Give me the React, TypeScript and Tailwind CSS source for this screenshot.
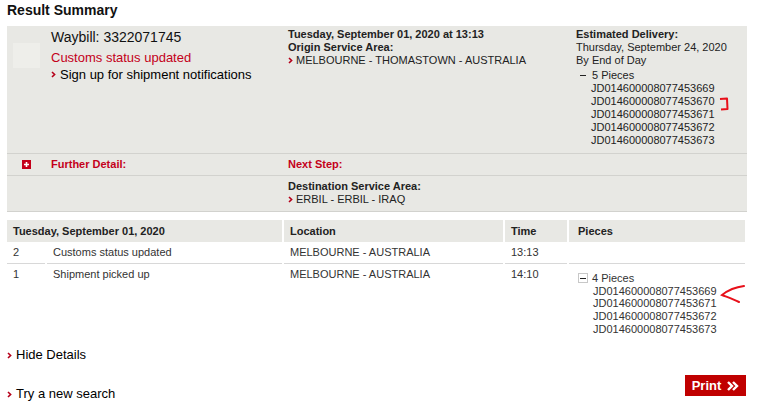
const pieces5 = [
  "JD014600008077453669",
  "JD014600008077453670",
  "JD014600008077453671",
  "JD014600008077453672",
  "JD014600008077453673",
];

const pieces4 = [
  "JD014600008077453669",
  "JD014600008077453671",
  "JD014600008077453672",
  "JD014600008077453673",
];

const Chevron = ({ className = "" }: { className?: string }) => (
  <svg width="5" height="7" viewBox="0 0 5 7" className={`inline-block shrink-0 ${className}`}>
    <path d="M1 1 L3.6 3.5 L1 6" fill="none" stroke="#b5001a" strokeWidth="1.6" />
  </svg>
);

const MinusBox = ({ boxed = false }: { boxed?: boolean }) => (
  <span
    className={`inline-flex w-[10px] h-[10px] items-center justify-center ${
      boxed ? "border border-[#c8c8c8] bg-white" : ""
    }`}
  >
    <span className="block w-[6px] h-[1.5px] bg-[#222]" />
  </span>
);

export default function App() {
  return (
    <div className="relative w-[758px] h-[410px] overflow-hidden bg-white px-[7px] font-['Liberation_Sans',Arial,sans-serif] text-[#222]">
      {/* title */}
      <div className="h-[26px] pt-[2px] text-[14px] leading-[17px] font-bold text-[#111]">Result Summary</div>

      {/* summary panel */}
      <div className="w-[740px] bg-[#e8e8e4] border-b border-[#d2d2ce]">
        <div className="grid grid-cols-[44px_237px_288px_171px] h-[127px] pt-[2px]">
          <div className="pl-[6px] pt-[15px]">
            <div className="w-[27px] h-[25px] bg-[#eeeeea]" />
          </div>
          <div className="pt-[1px]">
            <div className="text-[14px] leading-[17px] text-[#111] mb-[3px]">Waybill: 3322071745</div>
            <div className="text-[13px] leading-[17px] text-[#c4001a]">Customs status updated</div>
            <div className="flex items-center gap-[4px] text-[13px] leading-[17px] text-[#000]">
              <Chevron />
              <span>Sign up for shipment notifications</span>
            </div>
          </div>
          <div className="text-[11px] leading-[13px]">
            <div className="font-bold">Tuesday, September 01, 2020 at 13:13</div>
            <div className="font-bold">Origin Service Area:</div>
            <div className="flex items-center gap-[3px]">
              <Chevron />
              <span>MELBOURNE - THOMASTOWN - AUSTRALIA</span>
            </div>
          </div>
          <div className="text-[11px] leading-[13px]">
            <div className="font-bold">Estimated Delivery:</div>
            <div>Thursday, September 24, 2020</div>
            <div>By End of Day</div>
            <div className="mt-[2px] flex items-center gap-[4px] pl-[2px]">
              <MinusBox />
              <span>5 Pieces</span>
            </div>
            <div className="pl-[15px]">
              {pieces5.map((p) => (
                <div key={p}>{p}</div>
              ))}
            </div>
          </div>
        </div>

        <div className="grid grid-cols-[44px_237px_459px] h-[22px] border-t border-[#d2d2ce] items-center text-[11px] font-bold text-[#c4001a]">
          <div className="pl-[15px]">
            <span className="flex w-[9px] h-[9px] items-center justify-center bg-[#c4001a]">
              <svg width="7" height="7" viewBox="0 0 7 7">
                <path d="M3.5 1 V6 M1 3.5 H6" stroke="white" strokeWidth="1.6" />
              </svg>
            </span>
          </div>
          <div>Further Detail:</div>
          <div>Next Step:</div>
        </div>

        <div className="grid grid-cols-[281px_459px] h-[36px] border-t border-[#d2d2ce] pt-[4px] text-[11px] leading-[13px]">
          <div />
          <div>
            <div className="font-bold">Destination Service Area:</div>
            <div className="flex items-center gap-[3px]">
              <Chevron />
              <span>ERBIL - ERBIL - IRAQ</span>
            </div>
          </div>
        </div>
      </div>

      {/* history table */}
      <div className="mt-[8px] w-[740px] grid grid-cols-[38px_235px_219px_62px_176px] gap-x-[2px] text-[11px] leading-[13px] text-[#333]">
        <div className="col-span-2 h-[22px] bg-[#e8e8e4] px-[6px] pt-[5px] font-bold text-[#222]">Tuesday, September 01, 2020</div>
        <div className="h-[22px] bg-[#e8e8e4] px-[6px] pt-[5px] font-bold text-[#222]">Location</div>
        <div className="h-[22px] bg-[#e8e8e4] px-[6px] pt-[5px] font-bold text-[#222]">Time</div>
        <div className="h-[22px] bg-[#e8e8e4] px-[9px] pt-[5px] font-bold text-[#222]">Pieces</div>

        <div className="h-[22px] border-b border-[#d8d8d8] px-[6px] pt-[4px]">2</div>
        <div className="h-[22px] border-b border-[#d8d8d8] pl-[6px] pt-[4px]">Customs status updated</div>
        <div className="h-[22px] border-b border-[#d8d8d8] px-[6px] pt-[4px]">MELBOURNE - AUSTRALIA</div>
        <div className="h-[22px] border-b border-[#d8d8d8] px-[6px] pt-[4px]">13:13</div>
        <div className="h-[22px] border-b border-[#d8d8d8]" />

        <div className="h-[80px] px-[6px] pt-[4px]">1</div>
        <div className="h-[80px] pl-[6px] pt-[4px]">Shipment picked up</div>
        <div className="h-[80px] px-[6px] pt-[4px]">MELBOURNE - AUSTRALIA</div>
        <div className="h-[80px] px-[6px] pt-[4px]">14:10</div>
        <div className="h-[80px] pl-[9px] pt-[8px] leading-[12.7px]">
          <div className="flex items-center gap-[4px]">
            <MinusBox boxed />
            <span>4 Pieces</span>
          </div>
          <div className="pl-[15px]">
            {pieces4.map((p) => (
              <div key={p}>{p}</div>
            ))}
          </div>
        </div>
      </div>

      {/* links */}
      <div className="mt-[3px] flex items-center gap-[4px] text-[13px] leading-[16px] text-[#000]">
        <Chevron />
        <span>Hide Details</span>
      </div>
      <div className="mt-[12px] w-[740px] flex items-start justify-between">
        <div className="mt-[11px] flex items-center gap-[4px] text-[13px] leading-[16px] text-[#000]">
          <Chevron />
          <span>Try a new search</span>
        </div>
        <button className="mr-[1px] flex h-[21px] w-[61px] items-center justify-center gap-[6px] bg-[#c00000] text-[13px] font-bold text-white">
          <span>Print</span>
          <svg width="12" height="10" viewBox="0 0 12 10">
            <path d="M1 1 L5 5 L1 9 M6 1 L10 5 L6 9" fill="none" stroke="white" strokeWidth="2.4" />
          </svg>
        </button>
      </div>

      {/* hand-drawn annotations */}
      <svg className="absolute left-[718px] top-[96px]" width="12" height="16" viewBox="0 0 12 16">
        <path d="M2 3 L9 2.5 L9.5 13 L3 13.5" fill="none" stroke="#e8101a" strokeWidth="2" strokeLinejoin="round" />
      </svg>
      <svg className="absolute left-[718px] top-[283px]" width="30" height="22" viewBox="0 0 30 22">
        <path d="M26 3 C18 4 9 8 4 12 C9 14 15 16 21 19" fill="none" stroke="#e8101a" strokeWidth="2" strokeLinecap="round" />
      </svg>
    </div>
  );
}
